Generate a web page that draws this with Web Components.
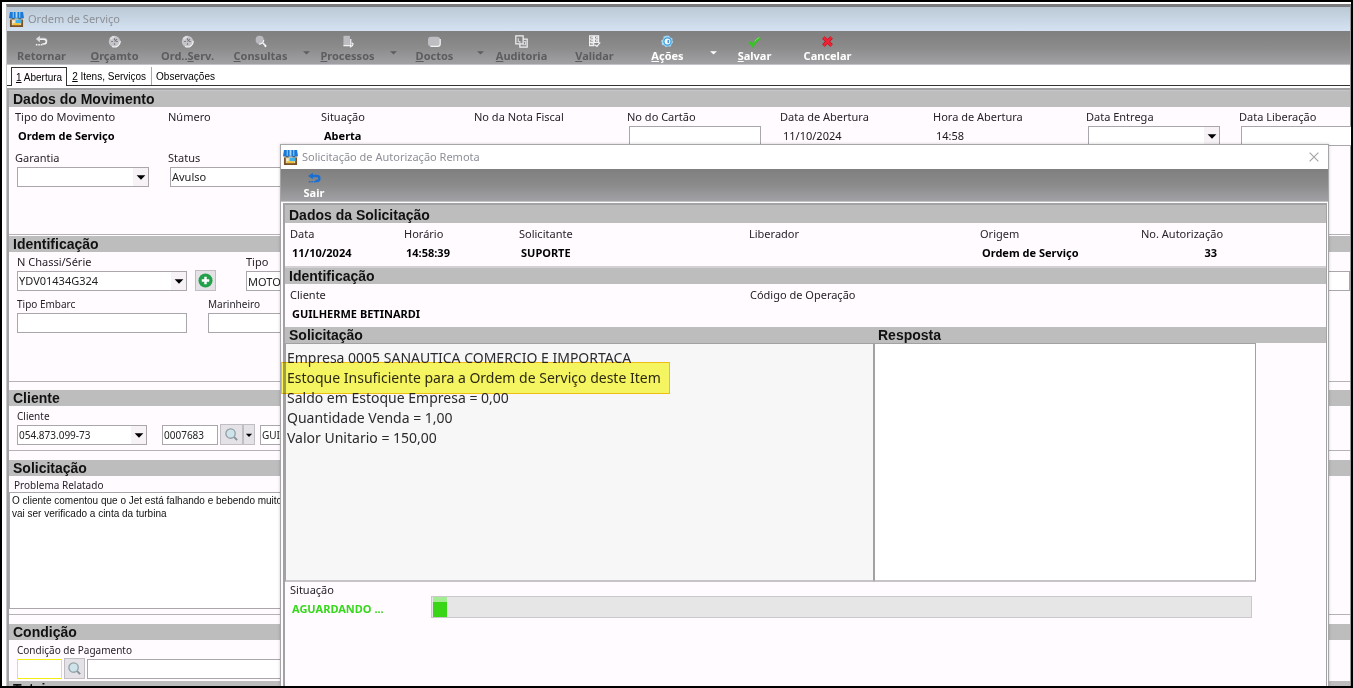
<!DOCTYPE html>
<html lang="pt-BR">
<head>
<meta charset="utf-8">
<title>Ordem de Serviço</title>
<style>
  html, body { margin: 0; height: 100%; }
  body { font: 11px/16px "Noto Sans", "Open Sans", sans-serif; color: #26242a; background: #000; }
</style>
</head>
<body>
<order-app></order-app>

<script>
const ICONS = {
  shop: '<path fill="#7a5128" d="M1 6h14v10H1z"/><path fill="#e9dcb6" d="M3 8h10v6H3z"/><path fill="#3fb2e8" d="M7 8h6v4H7z"/><path fill="#f3c12d" d="M4 12h8v2H4z"/><path fill="#1979d6" d="M1 0h14l1 7H0z"/><path fill="#a9d8f6" d="M4 0h1v6H4zM7 0h2v6H7zM11 0h1v6h-1z"/><path fill="#d5e8f6" d="M0 7h3v1H0zM6 7h4v1H6zM13 7h3v1h-3z"/><path fill="#e8f4ff" d="M4 9l2 2-2 1z"/>',
  back: '<path fill="none" stroke="#f2f2f4" stroke-width="2" d="M4 5h7q3 0 3 3t-3 3H9"/><path fill="none" stroke="#c9c9ce" d="M5 4h6q4 0 4 3"/><path fill="#dcdce0" d="M6 1v8L1 5z"/><path stroke="#f2f2f4" stroke-width="2" stroke-dasharray="2 1" d="M1 12h8"/>',
  exit: '<path fill="none" stroke="#1c6fd0" stroke-width="3" d="M4 5h7q3 0 3 3t-3 3H9"/><path fill="#1c6fd0" d="M6 1v8L0 5z"/><path stroke="#1c6fd0" stroke-width="2" stroke-dasharray="2 1" d="M1 12h8"/>',
  clock: '<circle cx="8" cy="8" r="7" fill="#c4c4c9"/><path fill="none" stroke="#f4f4f6" stroke-width="1.5" d="M15 7a7 7 0 0 1-10 7"/><path fill="#dedee2" d="M2 4l4-3 3 1-5 4z"/><path fill="none" stroke="#77777b" stroke-width="1.4" d="M8 4v2M8 10v2M4 8h2M8 8l3-3M10 8h2"/>',
  lens: '<circle cx="7" cy="6" r="5" fill="#b9b9be"/><path fill="none" stroke="#f0f0f3" stroke-width="1.5" d="M12 6a5 5 0 0 1-6 5"/><path stroke="#f0f0f3" stroke-width="2" d="M11 10l4 4"/><circle cx="14" cy="14" r="1" fill="#fff"/>',
  page: '<path fill="#bcbcc1" d="M3 1h8v12H3z"/><path fill="none" stroke="#f3f3f5" stroke-width="1.5" d="M3 13h9V5"/><path fill="none" stroke="#f3f3f5" stroke-width="1.5" d="M13 10q3 0 1 3l-3 2"/>',
  docs: '<rect x="0" y="2" width="15" height="12" rx="4" fill="#bdbdc2"/><path fill="none" stroke="#f3f3f5" stroke-width="1.5" d="M15 5v6q0 3-3 3H3"/>',
  audit: '<path fill="none" stroke="#f0f0f3" stroke-width="1.5" d="M1 1h9v10H1zM10 5h5v10H6v-4"/><path fill="none" stroke="#d6d6da" stroke-width="1.5" d="M4 4v4h2v3M11 8h2v4H9"/>',
  grid: '<path fill="none" stroke="#f0f0f3" stroke-width="1.5" d="M2 1h5v12H2zM8 1h5v8H8zM2 5h11M2 9h9M4 3h2M10 3h2M4 7h2M10 7h2M4 11h2"/><path fill="none" stroke="#f0f0f3" stroke-width="1.5" d="M8 12l3 2 4-5"/>',
  gear: '<path fill="#a5dafa" d="M6 1h4l1 2 3 1v3l1 2-2 2-1 3H8l-2 1-2-2-3-1V9L0 7l3-2V2z"/><circle cx="8" cy="8" r="4.4" fill="#f4fbff" stroke="#3f9bdc" stroke-width="1.6"/><path fill="#4a9ad6" d="M8 6h2v4H8z"/>',
  check: '<path fill="none" stroke="#35c421" stroke-width="3.4" d="M1 9q3 1 5 4 2-6 9-9"/><path fill="none" stroke="#8be67a" d="M8 8q2-3 6-5"/>',
  cross: '<path stroke="#b40f1f" stroke-width="4.4" d="M3 3l10 10M13 3L3 13"/><path stroke="#ef2334" stroke-width="3" d="M3 3l10 10M13 3L3 13"/>',
  find: '<path stroke="#87929a" stroke-width="2" d="M10 10l4 4"/><circle cx="7" cy="7" r="5" fill="#cfe3ea" stroke="#93a0a8" stroke-width="1.4"/>',
  plus: '<circle cx="8" cy="8" r="7.5" fill="#22a04a"/><path stroke="#fff" stroke-width="2.6" d="M8 4v8M4 8h8"/>',
  close: '<path stroke="#a5a5a8" stroke-width="1.4" d="M3 3l10 10M13 3L3 13"/>',
  down: '<path fill="currentColor" d="M3 6h10l-5 5z"/>'
};
const icon = (name, size) => `<svg width="${size}" height="${size}" viewBox="0 0 16 16" aria-hidden="true">${ICONS[name]}</svg>`;
const hot = (text, i) => i < 0 ? text : text.slice(0, i) + '<u>' + text[i] + '</u>' + text.slice(i + 1);

class Base extends HTMLElement {
  connectedCallback() {
    if (!this.shadowRoot) this.attachShadow({ mode: 'open' }).innerHTML = this.render();
  }
  attr(name, fallback = '') { return this.getAttribute(name) ?? fallback; }
}

/* Window caption with the shop icon; a close button when "closable" is set. */
customElements.define('title-bar', class extends Base {
  render() {
    return `<style>
      :host { display: flex; align-items: center; box-sizing: border-box; height: 24px; padding: 0 7px 0 2px; background: var(--bar, #fff); color: #8c9096; }
      svg { display: block; }
      span { flex: 1; padding-left: 4px; }
      button { border: 0; padding: 0; background: none; }
    </style>
    ${icon('shop', 15)}<span><slot></slot></span>
    ${this.hasAttribute('closable') ? `<button aria-label="Fechar">${icon('close', 14)}</button>` : ''}`;
  }
});

customElements.define('tool-bar', class extends Base {
  render() {
    return `<style>
      :host { display: flex; box-sizing: border-box; height: var(--tall, 34px); padding-top: 2px; background: linear-gradient(#7f7f80, #8b8b8c 50%, #a1a1a5); border-bottom: 1px solid #c4c4c8; }
    </style><slot></slot>`;
  }
});

/* Toolbar action: icon over a bold caption, "key" underlines the shortcut letter. */
customElements.define('tool-button', class extends Base {
  render() {
    const off = this.hasAttribute('disabled') ? 'disabled' : '';
    const label = this.attr('label');
    return `<style>
      :host { display: flex; }
      button { border: 0; padding: 0; background: none; font: bold 11px/14px "Noto Sans", "Open Sans", sans-serif; color: #fff; }
      button:disabled { color: #5d5d5f; }
      .main { width: var(--tool, 73px); padding-right: 4px; display: flex; flex-direction: column; align-items: center; justify-content: center; gap: 1px; white-space: nowrap; }
      .more { width: 14px; padding-top: 8px; }
      svg { display: block; }
      .more svg { margin: 0 2px; }
    </style>
    <button class="main" ${off}>${icon(this.attr('icon'), 13)}<span>${hot(label, +this.attr('key', -1))}</span></button>
    ${this.hasAttribute('menu') ? `<button class="more" aria-label="Mais ${label}" ${off}>${icon('down', 11)}</button>` : ''}`;
  }
});

customElements.define('tab-strip', class extends Base {
  render() {
    return `<style>
      :host { display: flex; align-items: flex-end; height: 20px; padding-left: 4px; background: #fff; border-bottom: 1px solid #333; }
      button { height: 18px; border: 0; padding: 2px 4px 0; background: none; font: 10px/16px "Liberation Sans", sans-serif; color: #000; }
      .on { height: 19px; margin-bottom: -1px; border: 1px solid #333; border-bottom: 0; background: #fffbff; }
      .mid { padding: 2px 5px 0; }
      .next { border-left: 1px solid #aaa; }
    </style>
    <button role="tab" aria-selected="true" class="on"><u>1</u> Abertura</button>
    <button role="tab" class="mid"><u>2</u> Itens, Serviços</button>
    <button role="tab" class="next">Observações</button>`;
  }
});

/* Titled block of the form: grey heading bar and the rows below it. */
customElements.define('form-section', class extends Base {
  render() {
    return `<style>
      :host { display: flow-root; box-sizing: border-box; }
      h2 { margin: 0; padding: 0 4px; background: #bdbdbd; color: #111; font: bold 14px/16px "Liberation Sans", sans-serif; }
    </style>
    <h2>${this.attr('heading')}</h2><slot></slot>`;
  }
});

/* Caption with a control below it. kind: static | text | combo */
customElements.define('form-field', class extends Base {
  render() {
    const label = this.attr('label'), value = this.attr('value'), kind = this.attr('kind', 'static');
    const aria = label ? '' : `aria-label="${this.attr('name')}"`;
    const control = {
      static: `<output id="c">${value}</output>`,
      text: `<input id="c" type="text" value="${value}" ${aria}>`,
      combo: `<div class="combo"><select id="c" ${aria}><option>${value}</option></select><span>${icon('down', 14)}</span></div>`
    }[kind];
    return `<style>
      :host { display: flex; flex-direction: column; justify-content: flex-end; gap: 1px; min-width: 0; font-size: 11px; }
      :host([small]) { font-size: 10px; }
      label { line-height: 16px; white-space: nowrap; }
      output { line-height: 20px; height: 20px; padding-left: var(--inset, 2px); white-space: nowrap; color: #1a181c; }
      :host([strong]) output { font-weight: bold; color: #000; }
      :host([right]) { width: fit-content; }
      :host([right]) output { text-align: right; padding-right: 6px; }
      :host([go]) output { color: #35d81a; font-weight: bold; }
      input, .combo { box-sizing: border-box; width: var(--w, 100%); height: 20px; margin: 0 0 0 var(--indent, 0); border: 1px solid var(--edge, #a9a7ab); background: #fff; }
      input, select { font: inherit; color: #222; border-radius: 0; outline: 0; }
      input { padding: 0 1px; }
      .combo { display: grid; grid-template-columns: 1fr 15px; color: #000; }
      select { grid-area: 1 / 1 / 2 / 3; min-width: 0; appearance: none; border: 0; padding: 0 1px; background: none; }
      .combo span { grid-area: 1 / 2; display: grid; place-items: center; background: #f6f2f6; pointer-events: none; }
      svg { display: block; }
    </style>
    ${label ? `<label for="c">${label}</label>` : ''}${control}`;
  }
});

customElements.define('icon-button', class extends Base {
  render() {
    return `<style>
      :host { display: block; width: 21px; height: 21px; }
      button { display: grid; place-items: center; box-sizing: border-box; width: 100%; height: 100%; padding: 0; border: 1px solid #c0bec2; background: #e4e2e6; color: #000; }
      svg { display: block; }
    </style>
    <button aria-label="${this.attr('label')}">${icon(this.attr('icon'), +this.attr('size', 15))}</button>`;
  }
});

/* The remote authorisation window. */
customElements.define('auth-dialog', class extends Base {
  render() {
    return `<style>
      :host { display: flex; flex-direction: column; border: 1px solid #a6a6a8; border-bottom: 0; background: #fffbff; box-shadow: 0 0 3px #0003; }
      tool-bar { --tall: 33px; --tool: 70px; }
      .panel { position: relative; flex: 1; margin: 1px 1px 0 2px; border: solid #a2a2a5; border-width: 2px 1px 0 2px; }
      .cols { display: grid; grid-template-columns: 114fr 115fr 230fr 231fr 161fr 185fr; padding: 3px 0 3px 5px; }
      .cols.two { grid-template-columns: 460fr 576fr; }
      .first { padding-top: 2px; background: linear-gradient(#bdbdbd 18px, #0000 0); }
      .next { border-top: 2px solid #d2d0d4; }
      .talk { display: grid; grid-template-columns: 589fr 382fr 70fr; }
      .fill { background: linear-gradient(#bdbdbd 16px, #0000 0); }
      textarea { display: block; box-sizing: border-box; width: 100%; height: 239px; margin: 0; padding: 4px 1px; border: 1px solid #a2a2a5; border-bottom: 2px solid #c6c4c8; border-radius: 0; outline: 0; resize: none; background: #fff; color: #2c2a2e; font: 14px/20px "Noto Sans", "Open Sans", sans-serif; }
      textarea[readonly] { background: #f7f7f7; }
      .state { display: grid; grid-template-columns: 141px 1fr; align-items: start; padding: 0 74px 0 5px; }
      progress { appearance: none; display: block; box-sizing: border-box; width: 100%; height: 22px; margin-top: 14px; padding: 0 1px; border: 1px solid #cac8ca; background: #e6e6e6; }
      progress::-webkit-progress-bar { background: #e6e6e6; }
      progress::-webkit-progress-value { background: linear-gradient(#a2ec92 5px, #39d618 5px); }
      mark { position: absolute; left: -4px; top: 157px; width: 389px; height: 32px; box-sizing: border-box; border: 1px solid #f7c413; background: #fdfc64; mix-blend-mode: multiply; }
    </style>
    <title-bar closable>Solicitação de Autorização Remota</title-bar>
    <tool-bar><tool-button icon="exit" label="Sair"></tool-button></tool-bar>
    <div class="panel">
      <form-section class="first" heading="Dados da Solicitação">
        <div class="cols">
          <form-field strong label="Data" value="11/10/2024"></form-field>
          <form-field strong label="Horário" value="14:58:39"></form-field>
          <form-field strong label="Solicitante" value="SUPORTE"></form-field>
          <form-field strong label="Liberador"></form-field>
          <form-field strong label="Origem" value="Ordem de Serviço"></form-field>
          <form-field strong right label="No. Autorização" value="33"></form-field>
        </div>
      </form-section>
      <form-section class="next" heading="Identificação">
        <div class="cols two">
          <form-field strong label="Cliente" value="GUILHERME BETINARDI"></form-field>
          <form-field strong label="Código de Operação"></form-field>
        </div>
      </form-section>
      <div class="talk">
        <form-section heading="Solicitação"><textarea readonly aria-label="Solicitação">Empresa 0005 SANAUTICA COMERCIO E IMPORTACA
Estoque Insuficiente para a Ordem de Serviço deste Item
Saldo em Estoque Empresa = 0,00
Quantidade Venda = 1,00
Valor Unitario = 150,00</textarea></form-section>
        <form-section heading="Resposta"><textarea aria-label="Resposta"></textarea></form-section>
        <div class="fill"></div>
      </div>
      <div class="state">
        <form-field go label="Situação" value="AGUARDANDO ..."></form-field>
        <progress max="819" value="14" aria-label="Situação"></progress>
      </div>
      <mark></mark>
    </div>`;
  }
});

customElements.define('order-app', class extends Base {
  render() {
    return `<style>
      :host { position: relative; display: block; box-sizing: border-box; height: 100vh; min-height: 480px; border: 2px solid #000; background: #fff; overflow: hidden; }
      .window { margin: 2px 0 0 4px; border-top: 3px solid #7b7b7d; border-left: 1px solid #c8c8ca; border-right: 1px solid #98989a; }
      title-bar { --bar: linear-gradient(#bbc9d6, #d5e2f2); }
      .panel { margin-top: 2px; border: solid #a2a2a5; border-width: 2px 0 0 2px; background: #fffbff; }
      .panel form-section { border-bottom: 1px solid #b4b2b6; }
      .s1 { min-height: 145px; margin-bottom: 1px; padding-top: 1px; background: linear-gradient(#c6c6c6 1px, #0000 0); --indent: 2px; --inset: 3px; }
      .s2 { min-height: 146px; margin-bottom: 8px; }
      .s3 { min-height: 61px; margin-bottom: 9px; }
      .s4 { min-height: 155px; margin-bottom: 9px; }
      .s5 { min-height: 57px; }
      .grid { display: grid; grid-template-columns: repeat(8, 153fr) 111fr; margin-top: 2px; padding-left: 6px; --w: 132px; }
      .row { display: flex; align-items: flex-end; margin-top: 2px; padding-left: 8px; }
      .grid + .grid { margin-top: 4px; }
      .row + .row { margin-top: 5px; }
      .problem { display: block; padding: 2px 0 0 5px; font-size: 10px; line-height: 14px; }
      textarea { display: block; box-sizing: border-box; width: calc(100% - 40px); height: 117px; margin: 0; padding: 1px 2px; border: 1px solid #a9a7ab; border-radius: 0; outline: 0; resize: none; font: 10px/13px "Liberation Sans", sans-serif; color: #111; }
      auth-dialog { position: absolute; left: 278px; right: 22px; top: 142px; bottom: 0; }
    </style>
    <div class="window">
      <title-bar>Ordem de Serviço</title-bar>
      <tool-bar>
        <tool-button icon="back" label="Retornar" disabled></tool-button>
        <tool-button icon="clock" label="Orçamto" key="0" disabled></tool-button>
        <tool-button icon="clock" label="Ord..Serv." key="5" disabled></tool-button>
        <tool-button icon="lens" label="Consultas" key="0" menu disabled></tool-button>
        <tool-button icon="page" label="Processos" key="0" menu disabled></tool-button>
        <tool-button icon="docs" label="Doctos" key="0" menu disabled></tool-button>
        <tool-button icon="audit" label="Auditoria" key="0" disabled></tool-button>
        <tool-button icon="grid" label="Validar" key="0" disabled></tool-button>
        <tool-button icon="gear" label="Ações" key="0" menu></tool-button>
        <tool-button icon="check" label="Salvar" key="0"></tool-button>
        <tool-button icon="cross" label="Cancelar"></tool-button>
      </tool-bar>
      <tab-strip role="tablist"></tab-strip>
      <div class="panel">
        <form-section class="s1" heading="Dados do Movimento">
          <div class="grid">
            <form-field strong label="Tipo do Movimento" value="Ordem de Serviço"></form-field>
            <form-field label="Número"></form-field>
            <form-field strong label="Situação" value="Aberta"></form-field>
            <form-field label="No da Nota Fiscal"></form-field>
            <form-field kind="text" label="No do Cartão"></form-field>
            <form-field label="Data de Abertura" value="11/10/2024"></form-field>
            <form-field label="Hora de Abertura" value="14:58"></form-field>
            <form-field kind="combo" label="Data Entrega"></form-field>
            <form-field kind="combo" label="Data Liberação"></form-field>
          </div>
          <div class="grid">
            <form-field kind="combo" label="Garantia"></form-field>
            <form-field kind="combo" label="Status" value="Avulso"></form-field>
          </div>
        </form-section>
        <form-section class="s2" heading="Identificação">
          <div class="row">
            <form-field style="--w:170px" kind="combo" label="N Chassi/Série" value="YDV01434G324"></form-field>
            <icon-button style="margin:0 30px 0 8px" icon="plus" label="Novo chassi"></icon-button>
            <form-field style="flex:1" kind="text" label="Tipo" value="MOTO"></form-field>
          </div>
          <div class="row">
            <form-field small style="--w:170px; margin-right:21px" kind="text" label="Tipo Embarc"></form-field>
            <form-field small style="--w:170px" kind="text" label="Marinheiro"></form-field>
          </div>
        </form-section>
        <form-section class="s3" heading="Cliente">
          <div class="row">
            <form-field small style="--w:130px; margin-right:15px" kind="combo" label="Cliente" value="054.873.099-73"></form-field>
            <form-field small style="--w:56px; margin-right:2px" kind="text" name="Código do cliente" value="0007683"></form-field>
            <icon-button style="width:23px" icon="find" label="Procurar cliente"></icon-button>
            <icon-button style="width:12px; margin-right:5px" icon="down" size="10" label="Opções de procura"></icon-button>
            <form-field small style="--w:300px" kind="text" name="Nome do cliente" value="GUILHERME BETINARDI"></form-field>
          </div>
        </form-section>
        <form-section class="s4" heading="Solicitação">
          <label class="problem" for="problem">Problema Relatado</label>
          <textarea id="problem">O cliente comentou que o Jet está falhando e bebendo muito
vai ser verificado a cinta da turbina</textarea>
        </form-section>
        <form-section class="s5" style="border:0" heading="Condição">
          <div class="row">
            <form-field small style="width:45px; --edge:#f2ec14; margin-right:2px" kind="text" label="Condição de Pagamento"></form-field>
            <icon-button style="margin-right:2px" icon="find" label="Procurar condição"></icon-button>
            <form-field style="--w:300px" kind="text" name="Descrição da condição"></form-field>
          </div>
        </form-section>
        <form-section style="border:0" heading="Totais"></form-section>
      </div>
    </div>
    <auth-dialog role="dialog" aria-label="Solicitação de Autorização Remota"></auth-dialog>`;
  }
});
</script>
</body>
</html>
